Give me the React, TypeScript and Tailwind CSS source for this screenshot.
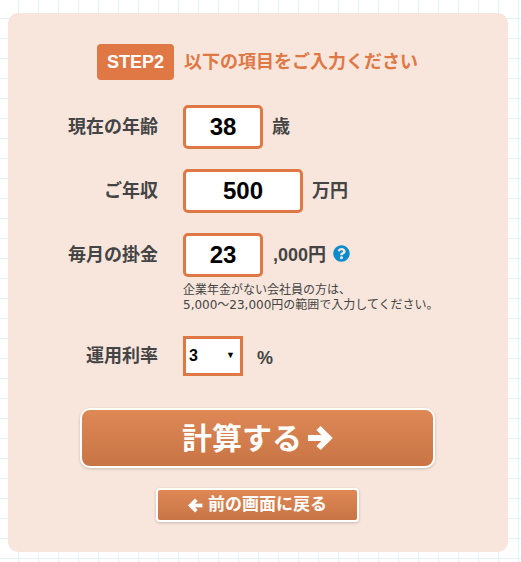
import React from 'react';
import { FaQuestionCircle } from 'react-icons/fa';

const font = "font-['Liberation_Sans','Noto_Sans_CJK_JP',sans-serif]";

function ArrowRight() {
  return (
    <svg width="26" height="26" viewBox="0 0 26 26" fill="none" stroke="white" strokeWidth="6">
      <path d="M1 13H21" />
      <path d="M11.5 3L21.5 13L11.5 23" />
    </svg>
  );
}

function ArrowLeft() {
  return (
    <svg width="15" height="15" viewBox="0 0 26 26" fill="none" stroke="white" strokeWidth="6.5">
      <path d="M25 13H5" />
      <path d="M14.5 3L4.5 13L14.5 23" />
    </svg>
  );
}

export default function App() {
  return (
    <div className={`${font} w-[521px] h-[562px] overflow-hidden bg-white bg-[linear-gradient(#e3f1f9_1px,transparent_1px),linear-gradient(90deg,#e3f1f9_1px,transparent_1px)] bg-[size:20px_20px] bg-[position:-2px_-2px] pt-[13px] pl-[8px]`}>
      <div className="w-[500px] h-[539px] rounded-[10px] bg-[#f8e6dc] pt-[31px]">

        {/* Heading */}
        <div className="flex items-center ml-[89px] h-[36px]">
          <span className="w-[77px] h-[36px] rounded-[4px] bg-[#df7845] text-white text-[18px] font-bold flex items-center justify-center">STEP2</span>
          <span className="ml-[10px] text-[18px] font-bold text-[#df7845]">以下の項目をご入力ください</span>
        </div>

        {/* Age */}
        <div className="flex items-center mt-[25px] h-[44px]">
          <label className="w-[150px] text-right text-[18px] font-bold text-[#444]">現在の年齢</label>
          <input readOnly value="38" className="ml-[25px] w-[80px] h-[44px] rounded-[5px] border-[3px] border-[#df7845] bg-white text-center text-[24px] font-bold text-black outline-none" />
          <span className="ml-[9px] text-[18px] font-bold text-[#444]">歳</span>
        </div>

        {/* Income */}
        <div className="flex items-center mt-[20px] h-[44px]">
          <label className="w-[150px] text-right text-[18px] font-bold text-[#444]">ご年収</label>
          <input readOnly value="500" className="ml-[25px] w-[120px] h-[44px] rounded-[5px] border-[3px] border-[#df7845] bg-white text-center text-[24px] font-bold text-black outline-none" />
          <span className="ml-[9px] text-[18px] font-bold text-[#444]">万円</span>
        </div>

        {/* Monthly */}
        <div className="flex items-center mt-[20px] h-[44px]">
          <label className="w-[150px] text-right text-[18px] font-bold text-[#444]">毎月の掛金</label>
          <input readOnly value="23" className="ml-[25px] w-[80px] h-[44px] rounded-[5px] border-[3px] border-[#df7845] bg-white text-center text-[24px] font-bold text-black outline-none" />
          <span className="ml-[10px] text-[18px] font-bold text-[#444]">,000円</span>
          <FaQuestionCircle className="ml-[7px] mb-[4px] text-[#0a8bcb]" size={17} />
        </div>
        <p className="ml-[175px] mt-[6px] text-[12px] leading-[15px] text-[#444] font-['DejaVu_Sans','Noto_Sans_CJK_JP',sans-serif]">
          企業年金がない会社員の方は、<br />5,000〜23,000円の範囲で入力してください。
        </p>

        {/* Rate */}
        <div className="flex items-center mt-[23px] h-[40px]">
          <label className="w-[150px] text-right text-[18px] font-bold text-[#444]">運用利率</label>
          <div className="ml-[25px] w-[60px] h-[40px] border-[3px] border-[#df7845] bg-white flex items-center justify-between pl-[3px] pr-[5px]">
            <span className="text-[16px] font-bold text-black">3</span>
            <span className="text-[9px] text-black">▼</span>
          </div>
          <span className="ml-[14px] mt-[4px] text-[18px] font-bold text-[#444]">%</span>
        </div>

        {/* Buttons */}
        <button className="mt-[32px] ml-[72px] w-[355px] h-[60px] rounded-[10px] border-2 border-white bg-[linear-gradient(#de8856,#c87444)] shadow-[0_1px_3px_rgba(0,0,0,0.2)] text-white text-[30px] font-bold flex items-center justify-center gap-[5px]">
          計算する<ArrowRight />
        </button>
        <button className="mt-[20px] ml-[148px] w-[203px] h-[34px] rounded-[4px] border-2 border-white bg-[linear-gradient(#de8856,#c87444)] shadow-[0_1px_3px_rgba(0,0,0,0.2)] text-white text-[17px] font-bold flex items-center justify-center gap-[5px]">
          <ArrowLeft />前の画面に戻る
        </button>
      </div>
    </div>
  );
}
